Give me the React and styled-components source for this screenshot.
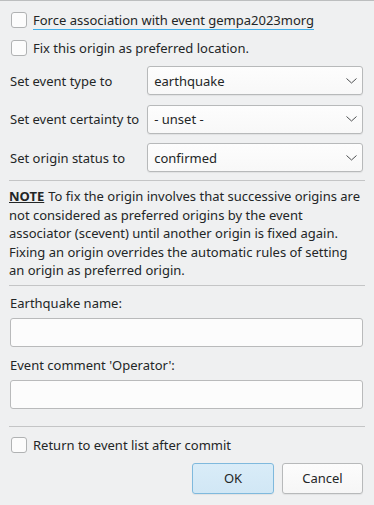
import React from 'react'
import styled, { createGlobalStyle } from 'styled-components'

const GlobalStyle = createGlobalStyle`
  html, body {
    margin: 0;
    padding: 0;
    background: #eff0f1;
  }
  body {
    font-family: 'Noto Sans', 'DejaVu Sans', sans-serif;
    font-size: 13px;
    color: #232627;
  }
`

const Chevron = () => (
  <svg width='11' height='6' viewBox='0 0 11 6'>
    <path d='M0.5 0.5 L5.5 5 L10.5 0.5' fill='none' stroke='#4d4f50' strokeWidth='1' />
  </svg>
)

const CheckRow = ({ label, focused }) => (
  <CheckRowStyled>
    <BoxStyled />
    <CheckLabelStyled focused={focused}>{label}</CheckLabelStyled>
  </CheckRowStyled>
)

const Combo = ({ value }) => (
  <ComboStyled>
    <span>{value}</span>
    <Chevron />
  </ComboStyled>
)

const App = () => {
  return (
    <>
      <GlobalStyle />
      <DialogStyled>
        <TopChecksStyled>
          <CheckRow label='Force association with event gempa2023morg' focused />
          <CheckRow label='Fix this origin as preferred location.' />
        </TopChecksStyled>

        <FormGridStyled>
          <LabelStyled>Set event type to</LabelStyled>
          <Combo value='earthquake' />
          <LabelStyled>Set event certainty to</LabelStyled>
          <Combo value='- unset -' />
          <LabelStyled>Set origin status to</LabelStyled>
          <Combo value='confirmed' />
        </FormGridStyled>

        <SeparatorStyled top={8} />

        <NoteStyled>
          <NoteTagStyled>NOTE</NoteTagStyled>To fix the origin involves that successive
          origins are not considered as preferred origins by the event associator
          (scevent) until another origin is fixed again. Fixing an origin overrides
          the automatic rules of setting an origin as preferred origin.
        </NoteStyled>

        <SeparatorStyled top={5} />

        <FieldStyled>
          <FieldLabelStyled>Earthquake name:</FieldLabelStyled>
          <InputStyled />
        </FieldStyled>
        <FieldStyled>
          <FieldLabelStyled>Event comment 'Operator':</FieldLabelStyled>
          <InputStyled />
        </FieldStyled>

        <SeparatorStyled top={17} />

        <BottomStyled>
          <CheckRow label='Return to event list after commit' />
          <ButtonRowStyled>
            <ButtonStyled primary>OK</ButtonStyled>
            <ButtonStyled>Cancel</ButtonStyled>
          </ButtonRowStyled>
        </BottomStyled>
      </DialogStyled>
    </>
  )
}

export default App

// STYLING
const DialogStyled = styled.div`
  box-sizing: border-box;
  width: 374px;
  height: 505px;
  border-top: 1px solid #bcbebf;
  padding: 0 9px;
  display: flex;
  flex-direction: column;
`

const TopChecksStyled = styled.div`
  display: flex;
  flex-direction: column;
  gap: 12px;
  padding: 11px 0 0 2px;
`

const CheckRowStyled = styled.div`
  display: flex;
  align-items: center;
  gap: 6px;
  height: 16px;
`

const BoxStyled = styled.span`
  box-sizing: border-box;
  width: 16px;
  height: 16px;
  flex: none;
  background: #fcfcfc;
  border: 1px solid #b0b2b3;
  border-radius: 3px;
`

const CheckLabelStyled = styled.span`
  position: relative;
  white-space: nowrap;
  line-height: 18px;
  &::after {
    content: '';
    display: ${p => (p.focused ? 'block' : 'none')};
    position: absolute;
    left: 0;
    right: 0;
    bottom: -1px;
    height: 1px;
    background: #3daee9;
  }
`

const FormGridStyled = styled.div`
  display: grid;
  grid-template-columns: auto 1fr;
  column-gap: 8px;
  row-gap: 9.5px;
  align-items: center;
  margin: 10px 2px 0 1px;
`

const LabelStyled = styled.span`
  white-space: nowrap;
  line-height: 18px;
`

const ComboStyled = styled.div`
  box-sizing: border-box;
  height: 29px;
  display: flex;
  align-items: center;
  justify-content: space-between;
  padding: 0 5px 0 6px;
  background: linear-gradient(#fdfdfd, #f8f8f8);
  border: 1px solid #b7b9ba;
  border-radius: 3px;
  box-shadow: 0 1px 1px rgba(0, 0, 0, 0.06);
`

const SeparatorStyled = styled.div`
  flex: none;
  height: 1px;
  background: #c4c5c6;
  margin-top: ${p => p.top}px;
`

const NoteStyled = styled.p`
  margin: 6px 1px 0 0;
  line-height: 18.5px;
`

const NoteTagStyled = styled.b`
  text-decoration: underline;
  font-weight: 700;
  margin-right: 4px;
`

const FieldStyled = styled.div`
  display: flex;
  flex-direction: column;
  gap: 6px;
  margin: 8px 2px 0 1px;
  & + & {
    margin-top: 9px;
  }
`

const FieldLabelStyled = styled.span`
  line-height: 18px;
`

const InputStyled = styled.div`
  box-sizing: border-box;
  height: 29px;
  background: #fcfcfc;
  border: 1px solid #b9babb;
  border-radius: 3px;
`

const BottomStyled = styled.div`
  display: flex;
  flex-direction: column;
  padding: 10px 2px 0 2px;
`

const ButtonRowStyled = styled.div`
  display: flex;
  justify-content: flex-end;
  gap: 8px;
  margin-top: 10px;
`

const ButtonStyled = styled.button`
  box-sizing: border-box;
  width: ${p => (p.primary ? '82px' : '81px')};
  height: 31px;
  padding: 0;
  font-family: inherit;
  font-size: 13px;
  color: #232627;
  border-radius: 3px;
  border: 1px solid ${p => (p.primary ? '#7fb9dd' : '#b7b9ba')};
  background: ${p =>
    p.primary ? 'linear-gradient(#d9ecf8, #d1e7f5)' : 'linear-gradient(#fcfcfc, #f6f6f6)'};
  box-shadow: 0 1px 1px rgba(0, 0, 0, 0.06);
`
